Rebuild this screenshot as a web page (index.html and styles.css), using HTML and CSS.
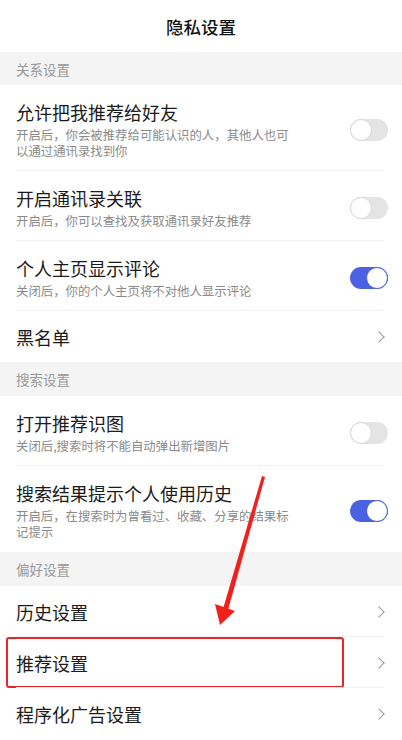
FILE: index.html
```html
<!DOCTYPE html>
<html lang="zh-CN">
<head>
  <meta charset="UTF-8" />
  <meta name="viewport" content="width=device-width, initial-scale=1.0"/>
  <title>隐私设置</title>
  <link rel="stylesheet" href="styles.css">
</head>
<body>
  <div class="page">
    <header class="top-bar">隐私设置</header>

    <div class="section first">关系设置</div>
    <div class="row">
      <div class="row-text">
        <div class="row-title">允许把我推荐给好友</div>
        <div class="row-desc">开启后，你会被推荐给可能认识的人，其他人也可以通过通讯录找到你</div>
      </div>
      <span class="switch"></span>
    </div>
    <div class="row">
      <div class="row-text">
        <div class="row-title">开启通讯录关联</div>
        <div class="row-desc">开启后，你可以查找及获取通讯录好友推荐</div>
      </div>
      <span class="switch"></span>
    </div>
    <div class="row">
      <div class="row-text">
        <div class="row-title">个人主页显示评论</div>
        <div class="row-desc">关闭后，你的个人主页将不对他人显示评论</div>
      </div>
      <span class="switch on"></span>
    </div>
    <div class="row link last">
      <div class="row-title">黑名单</div>
      <span class="chevron"></span>
    </div>

    <div class="section">搜索设置</div>
    <div class="row">
      <div class="row-text">
        <div class="row-title">打开推荐识图</div>
        <div class="row-desc">关闭后,搜索时将不能自动弹出新增图片</div>
      </div>
      <span class="switch"></span>
    </div>
    <div class="row last">
      <div class="row-text">
        <div class="row-title">搜索结果提示个人使用历史</div>
        <div class="row-desc">开启后，在搜索时为曾看过、收藏、分享的结果标记提示</div>
      </div>
      <span class="switch on"></span>
    </div>

    <div class="section">偏好设置</div>
    <div class="row link">
      <div class="row-title">历史设置</div>
      <span class="chevron"></span>
    </div>
    <div class="row link marked">
      <div class="row-title">推荐设置</div>
      <span class="chevron"></span>
      <span class="mark-box"></span>
    </div>
    <div class="row link last">
      <div class="row-title">程序化广告设置</div>
      <span class="chevron"></span>
    </div>

    <svg class="arrow" width="402" height="740" viewBox="0 0 402 740">
      <polygon points="262,476 265,477 228,610 223,609" fill="#f0201c"/>
      <polygon points="215,604 235,611 220,625" fill="#f0201c"/>
    </svg>
  </div>
</body>
</html>
```

FILE: styles.css
```css
body {
  margin: 0;
  background-color: #fff;
  font-family: "Noto Sans CJK SC", "Noto Sans", sans-serif;
  color: #1b1b1b;
}

.page {
  position: relative;
  width: 402px;
  height: 740px;
  overflow: hidden;
}

.top-bar {
  height: 52px;
  display: flex;
  justify-content: center;
  align-items: center;
  font-size: 17.5px;
  font-weight: 500;
  color: #111;
}

.section {
  height: 34px;
  display: flex;
  align-items: center;
  padding: 0 16px;
  background-color: #f4f4f4;
  font-size: 13.5px;
  color: #999;
}

.section.first {
  height: 33px;
}

.row {
  position: relative;
  display: flex;
  align-items: center;
  justify-content: space-between;
  padding: 15px 14px 12px 16px;
}

.row::after {
  content: "";
  position: absolute;
  left: 16px;
  right: 18px;
  bottom: 0;
  height: 1px;
  background-color: #f0f0f0;
}

.row.last::after {
  display: none;
}

.row.link {
  height: 51px;
  padding: 0 16px;
  box-sizing: border-box;
}

.row-title {
  font-size: 18px;
  line-height: 24px;
  color: #1b1b1b;
}

.row-desc {
  margin-top: 3px;
  max-width: 280px;
  font-size: 12.4px;
  line-height: 16px;
  color: #8a8a8a;
}

.switch {
  position: relative;
  flex-shrink: 0;
  width: 38px;
  height: 22px;
  border-radius: 11px;
  background-color: #e4e4e4;
}

.switch::before {
  content: "";
  position: absolute;
  top: 0;
  left: 0;
  width: 20px;
  height: 20px;
  border-radius: 50%;
  background-color: #fff;
  border: 1px solid #d8d8d8;
}

.switch.on {
  background-color: #4a62e2;
}

.switch.on::before {
  left: auto;
  right: 0;
  border-color: #4a62e2;
}

.chevron {
  width: 7px;
  height: 7px;
  margin-right: 3px;
  border-top: 1.3px solid #999;
  border-right: 1.3px solid #999;
  transform: rotate(45deg);
}

.mark-box {
  position: absolute;
  left: 6px;
  top: 0;
  width: 338px;
  height: 51px;
  box-sizing: border-box;
  border: 2.5px solid #e8262a;
  border-radius: 3px;
}

.arrow {
  position: absolute;
  left: 0;
  top: 0;
  pointer-events: none;
}
```
